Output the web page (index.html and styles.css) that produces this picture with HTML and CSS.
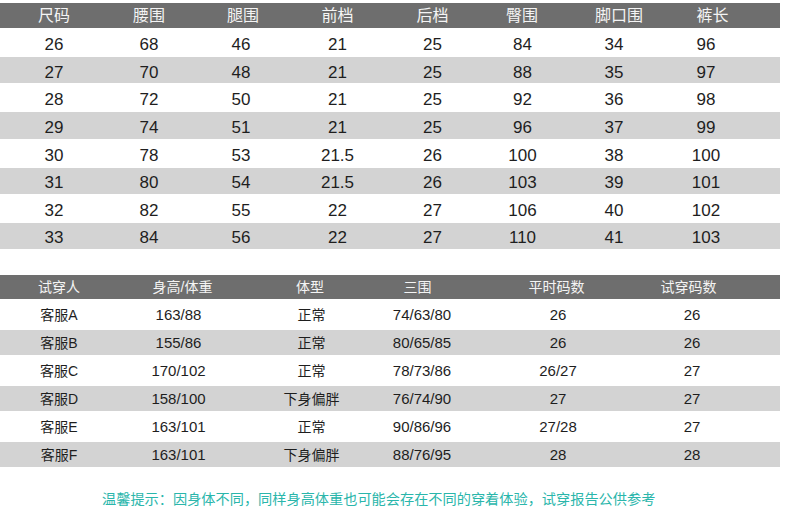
FILE: index.html
```html
<!DOCTYPE html>
<html lang="zh">
<head>
<meta charset="utf-8">
<title>尺码表</title>
<link rel="stylesheet" href="styles.css">
</head>
<body>
<div class="page">
  <div class="size-table">
    <div class="st-head">
      <div>尺码</div><div>腰围</div><div>腿围</div><div>前档</div><div>后档</div><div>臀围</div><div>脚口围</div><div>裤长</div>
    </div>
    <div class="st-body">
      <div class="st-row"><div>26</div><div>68</div><div>46</div><div>21</div><div>25</div><div>84</div><div>34</div><div>96</div></div>
      <div class="st-row"><div>27</div><div>70</div><div>48</div><div>21</div><div>25</div><div>88</div><div>35</div><div>97</div></div>
      <div class="st-row"><div>28</div><div>72</div><div>50</div><div>21</div><div>25</div><div>92</div><div>36</div><div>98</div></div>
      <div class="st-row"><div>29</div><div>74</div><div>51</div><div>21</div><div>25</div><div>96</div><div>37</div><div>99</div></div>
      <div class="st-row"><div>30</div><div>78</div><div>53</div><div>21.5</div><div>26</div><div>100</div><div>38</div><div>100</div></div>
      <div class="st-row"><div>31</div><div>80</div><div>54</div><div>21.5</div><div>26</div><div>103</div><div>39</div><div>101</div></div>
      <div class="st-row"><div>32</div><div>82</div><div>55</div><div>22</div><div>27</div><div>106</div><div>40</div><div>102</div></div>
      <div class="st-row"><div>33</div><div>84</div><div>56</div><div>22</div><div>27</div><div>110</div><div>41</div><div>103</div></div>
    </div>
  </div>

  <div class="try-table">
    <div class="tt-head">
      <div>试穿人</div><div>身高/体重</div><div>体型</div><div>三围</div><div>平时码数</div><div>试穿码数</div>
    </div>
    <div class="tt-body">
      <div class="tt-row"><div class="zh">客服A</div><div>163/88</div><div class="zh">正常</div><div>74/63/80</div><div>26</div><div>26</div></div>
      <div class="tt-row"><div class="zh">客服B</div><div>155/86</div><div class="zh">正常</div><div>80/65/85</div><div>26</div><div>26</div></div>
      <div class="tt-row"><div class="zh">客服C</div><div>170/102</div><div class="zh">正常</div><div>78/73/86</div><div>26/27</div><div>27</div></div>
      <div class="tt-row"><div class="zh">客服D</div><div>158/100</div><div class="zh">下身偏胖</div><div>76/74/90</div><div>27</div><div>27</div></div>
      <div class="tt-row"><div class="zh">客服E</div><div>163/101</div><div class="zh">正常</div><div>90/86/96</div><div>27/28</div><div>27</div></div>
      <div class="tt-row"><div class="zh">客服F</div><div>163/101</div><div class="zh">下身偏胖</div><div>88/76/95</div><div>28</div><div>28</div></div>
    </div>
  </div>

  <p class="note">温馨提示：因身体不同，同样身高体重也可能会存在不同的穿着体验，试穿报告公供参考</p>
</div>
</body>
</html>
```

FILE: styles.css
```css
* { box-sizing: border-box; }

html, body {
  margin: 0;
  padding: 0;
  background: #ffffff;
}

body {
  font-family: "Liberation Sans", "Noto Sans CJK SC", sans-serif;
  color: #1e1e1e;
  width: 790px;
  height: 521px;
  overflow: hidden;
}

.page {
  padding-top: 3px;
  width: 780px;
}

/* ---------- size table ---------- */
.st-head {
  display: grid;
  grid-template-columns: 94px 96px 92px 97px 93px 86px 108px 79px;
  padding-left: 7px;
  height: 25px;
  align-items: center;
  background: #6e6e6e;
  color: #f4f4f4;
  font-size: 16px;
  line-height: 1;
  text-align: center;
}

.st-row {
  display: grid;
  grid-template-columns: 94px 96px 88px 105px 85px 95px 88px 96px;
  padding-left: 7px;
  align-items: center;
  font-size: 17px;
  line-height: 1;
  text-align: center;
  padding-top: 4px;
}

.st-row:nth-child(odd) {
  height: 29px;
  background: #ffffff;
}

.st-row:nth-child(even) {
  height: 26.25px;
  background: #d3d3d3;
}

/* ---------- try-on table ---------- */
.try-table {
  margin-top: 26px;
}

.tt-head {
  display: grid;
  grid-template-columns: 118px 129px 126px 89px 189px 75px;
  height: 24px;
  align-items: center;
  background: #6e6e6e;
  color: #f4f4f4;
  font-size: 14px;
  line-height: 1;
  text-align: center;
}

.tt-row {
  display: grid;
  grid-template-columns: 118px 121px 145px 76px 196px 72px;
  align-items: center;
  font-size: 15px;
  line-height: 1;
  text-align: center;
}

.tt-row .zh {
  font-size: 14px;
}

.tt-row:nth-child(odd) {
  height: 31px;
  background: #ffffff;
}

.tt-row:nth-child(even) {
  height: 25px;
  background: #d3d3d3;
}

/* ---------- note ---------- */
.note {
  margin: 22px 0 0 0;
  padding-left: 102px;
  font-size: 14.2px;
  line-height: 20px;
  color: #2ab6ab;
  white-space: nowrap;
}
```
